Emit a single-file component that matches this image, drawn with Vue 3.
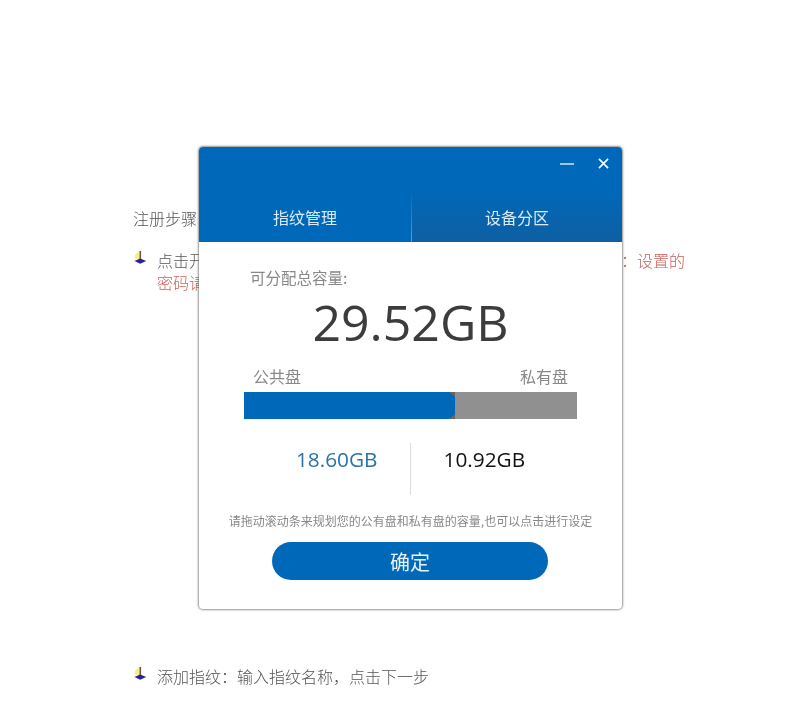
<script setup>
const tabs = ['指纹管理', '设备分区']
</script>

<template>
  <div class="page">
    <main class="doc">
      <p class="intro">注册步骤：</p>
      <div class="item">
        <svg class="bullet" viewBox="0 0 14 14">
          <path d="M1.5 6C2 3 4 1 6.5 1v7H3.5z" fill="#f6ec8c" />
          <path d="M6.5 0h1.6v9H6.5z" fill="#6a5a40" />
          <path d="M1.5 10 7.2 7.5l6 2.5-6 2.8z" fill="#2a1f9f" />
        </svg>
        <p>点击开始注册，按照提示设置管理员密码并确认，再次输入。<span class="red">注意：设置的</span><br /><span class="red">密码请牢记，忘记密码后将无法恢复设备中的数据。</span></p>
      </div>
      <div class="item last">
        <svg class="bullet" viewBox="0 0 14 14">
          <path d="M1.5 6C2 3 4 1 6.5 1v7H3.5z" fill="#f6ec8c" />
          <path d="M6.5 0h1.6v9H6.5z" fill="#6a5a40" />
          <path d="M1.5 10 7.2 7.5l6 2.5-6 2.8z" fill="#2a1f9f" />
        </svg>
        <p>添加指纹：输入指纹名称，点击下一步</p>
      </div>
    </main>

    <section class="dialog">
      <header class="head">
        <div class="controls">
          <svg class="ctl" viewBox="0 0 14 12"><path d="M0 6h14" /></svg>
          <svg class="ctl close" viewBox="0 0 12 12"><path d="M1 1l10 10M11 1 1 11" /></svg>
        </div>
        <nav class="tabs">
          <div class="tab">{{ tabs[0] }}</div>
          <div class="tab alt">{{ tabs[1] }}</div>
        </nav>
      </header>

      <div class="body">
        <div class="cap">可分配总容量:</div>
        <div class="total">29.52GB</div>
        <div class="labels"><span>公共盘</span><span>私有盘</span></div>
        <div class="bar">
          <div class="fill" style="width: 63.4%"></div>
        </div>
        <div class="values">
          <div class="val pub">18.60GB</div>
          <div class="val pri">10.92GB</div>
        </div>
        <div class="hint">请拖动滚动条来规划您的公有盘和私有盘的容量,也可以点击进行设定</div>
        <button class="ok">确定</button>
      </div>
    </section>
  </div>
</template>

<style scoped>
.page {
  position: relative;
  width: 800px;
  height: 719px;
  overflow: hidden;
  background: #fff;
  font-family: "Noto Sans CJK SC", "Liberation Sans", sans-serif;
  filter: blur(0.35px);
}
.doc {
  padding: 207px 0 0 133px;
  color: #555;
  font-size: 16px;
  font-weight: 300;
  line-height: 22px;
}
.doc p { margin: 0; white-space: nowrap; }
.intro { margin-bottom: 20px !important; }
.item { display: flex; gap: 10px; }
.item.last { margin-top: 372px; }
.bullet { width: 14px; height: 14px; margin-top: 2px; flex: none; }
.red { color: #c9605c; }

.dialog {
  position: absolute;
  left: 199px;
  top: 147px;
  width: 423px;
  height: 462px;
  display: flex;
  flex-direction: column;
  background: #fff;
  border-radius: 4px;
  overflow: hidden;
  box-shadow: 0 0 2px 1px rgba(90, 90, 90, .65);
}
.head { height: 95px; background: #0068b8; display: flex; flex-direction: column; }
.controls {
  box-sizing: border-box;
  height: 45px;
  display: flex;
  justify-content: flex-end;
  align-items: center;
  gap: 24px;
  padding: 0 13px 12px 0;
}
.ctl { width: 14px; height: 12px; fill: none; stroke: #d5e6f4; stroke-width: 1.4; }
.ctl.close { width: 11px; height: 11px; stroke: #fff; stroke-width: 1.8; }
.tabs { flex: 1; display: flex; }
.tab {
  flex: 0 0 212px;
  display: flex;
  align-items: center;
  justify-content: center;
  color: #d8ebf8;
  font-size: 16px;
  box-sizing: border-box;
}
.tab.alt {
  flex: 1;
  border-left: 1px solid;
  border-image: linear-gradient(#0068b8, #5aa0d4) 1;
  background: linear-gradient(#0068b8, #0f5fa2);
}
.body {
  flex: 1;
  display: flex;
  flex-direction: column;
  padding: 0 45px;
  color: #888;
}
.cap { font-size: 15.5px; margin: 24px 0 0 6px; line-height: 22px; }
.total {
  font-family: "Open Sans", sans-serif;
  font-size: 50px;
  color: #3c3c3c;
  text-align: center;
  line-height: 66px;
  margin-top: 1px;
}
.labels {
  display: flex;
  justify-content: space-between;
  font-size: 16px;
  line-height: 22px;
  padding: 0 9px;
  margin-top: 10px;
}
.bar {
  height: 27px;
  margin-top: 5px;
  background: linear-gradient(90deg, #666 0 63.4%, #909090 63.4%);
}
.fill {
  height: 100%;
  background: #0068b8;
  clip-path: polygon(0 0, calc(100% - 6px) 0, 100% 5px, 100% calc(100% - 5px), calc(100% - 6px) 100%, 0 100%);
}
.values { display: flex; margin-top: 24px; height: 52px; }
.val {
  flex: 1;
  font-family: "Open Sans", sans-serif;
  font-size: 20.8px;
  line-height: 32px;
}
.pub { color: #2a72a8; text-align: right; padding-right: 32px; border-right: 1px solid #ddd; }
.pri { color: #111; padding-left: 33px; }
.hint {
  margin: 18px -30px 0;
  text-align: center;
  font-size: 12px;
  line-height: 16px;
  color: #888;
  white-space: nowrap;
}
.ok {
  align-self: center;
  margin: 13px 1px 0 0;
  width: 276px;
  height: 38px;
  border: 0;
  border-radius: 19px;
  background: #0068b8;
  color: #e6f2fb;
  font: inherit;
  font-size: 20px;
  padding: 0;
}
</style>
